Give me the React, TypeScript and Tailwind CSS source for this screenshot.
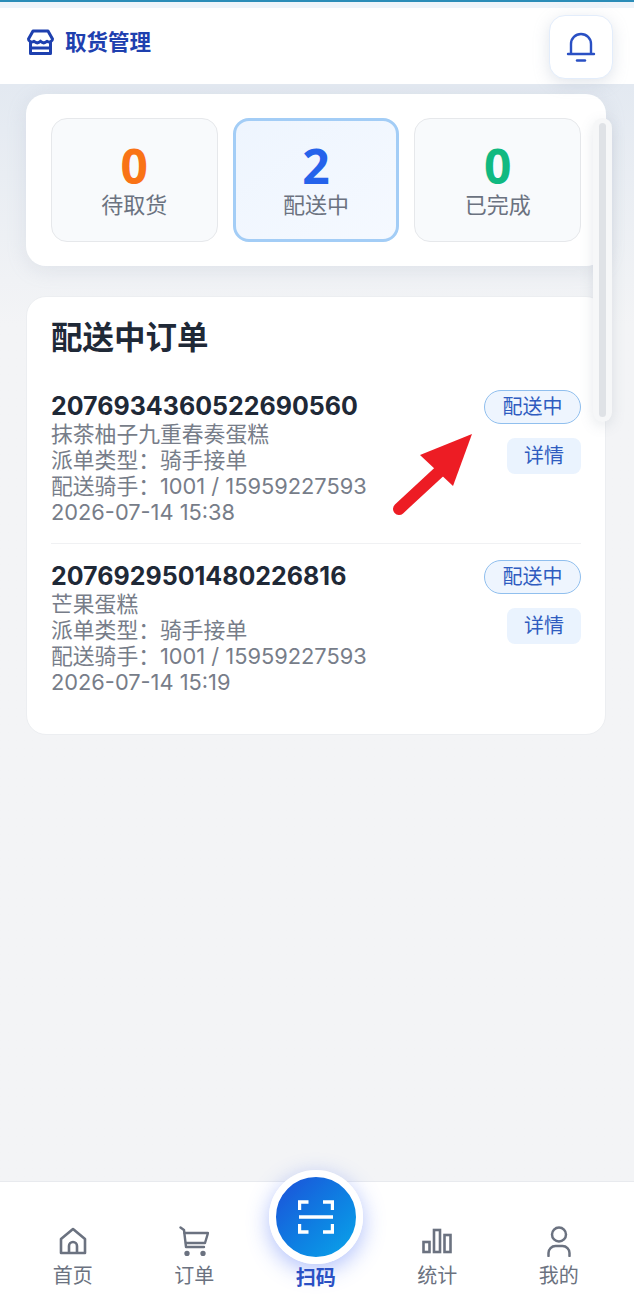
import { ReactNode } from "react";

const font = "font-['Inter','Noto_Sans_CJK_SC',sans-serif]";

function StatBox({ value, label, color, active }: { value: string; label: string; color: string; active?: boolean }) {
  return (
    <div
      className={
        active
          ? "h-[124px] rounded-[16px] border-[3px] border-[#a3cdf6] bg-gradient-to-br from-[#eef5fe] to-[#f5f9ff] flex flex-col items-center pt-[19px]"
          : "h-[124px] rounded-[16px] border border-[#e6e8eb] bg-[#f8fafc] flex flex-col items-center pt-[21px]"
      }
    >
      <div className={`font-['Noto_Sans',sans-serif] text-[48px] leading-[52px] font-bold ${color}`}>{value}</div>
      <div className="text-[22px] leading-[28px] text-[#6b7280] -mt-[1px]">{label}</div>
    </div>
  );
}

function OrderRow({ no, name, time }: { no: string; name: string; time: string }) {
  return (
    <div className="flex justify-between items-start">
      <div>
        <div className="text-[25px] leading-[30px] font-bold text-[#1f2937]">{no}</div>
        <div className="text-[21.8px] leading-[26px] text-[#777d89]">
          <div>{name}</div>
          <div>派单类型：骑手接单</div>
          <div>配送骑手：1001 / 15959227593</div>
          <div>{time}</div>
        </div>
      </div>
      <div className="flex flex-col items-end -mt-[1px]">
        <div className="w-[97px] h-[34px] rounded-full border border-[#90bfee] bg-[#eef5fe] text-[#2f5cc0] text-[20px] leading-[32px] text-center">
          配送中
        </div>
        <div className="mt-[14px] w-[74px] h-[36px] rounded-[8px] bg-[#eaf3fe] text-[#2f5cc0] text-[20px] leading-[36px] text-center">
          详情
        </div>
      </div>
    </div>
  );
}

function NavItem({ icon, label }: { icon: ReactNode; label: string }) {
  return (
    <div className="w-[121.5px] flex flex-col items-center pt-[40px]">
      <div className="h-[38px] flex items-center justify-center text-[#6b7280]">{icon}</div>
      <div className="text-[20px] leading-[26px] text-[#6b7280] mt-[3px]">{label}</div>
    </div>
  );
}

export default function App() {
  return (
    <div className={`relative h-[1295px] overflow-hidden bg-[#f3f4f6] flex flex-col ${font}`}>
      {/* top strip */}
      <div className="h-[8px] bg-[#eef4fa]">
        <div className="h-[2px] bg-[#2b8db8]" />
      </div>

      <header className="h-[76px] bg-white flex justify-between pr-[21px] pl-[27px] relative z-10">
        <div className="flex items-start pt-[19px] gap-[12px]">
          <svg width="27" height="26" viewBox="0 0 27 26" fill="none" stroke="#1e40af" strokeWidth="3" strokeLinejoin="round" className="mt-[2px]">
            <path d="M6 2h15l4.500 8c0 2.500-3 4-5.500 2.200-2 2-4.500 2-6.500 0-2 2-4.500 2-6.500 0C4.500 14 1.500 12.500 1.500 10z" />
            <path d="M3.500 12v12.500h20V12" />
            <path d="M3.500 19h20" />
          </svg>
          <div className="text-[21.5px] leading-[30px] font-bold text-[#1e40af] -ml-[1px]">取货管理</div>
        </div>
        <div className="mt-[7px] w-[64px] h-[64px] rounded-[16px] bg-white border border-[#e3edfb] shadow-[0_4px_16px_rgba(148,163,184,0.28)] flex items-center justify-center">
          <svg width="30" height="32" viewBox="0 0 30 32" fill="none" stroke="#2a50c4" strokeWidth="2.4" strokeLinecap="round">
            <path d="M5 22V13a10 10 0 0 1 20 0v9" />
            <path d="M2 23h26" />
            <path d="M11 29.500h8" />
          </svg>
        </div>
      </header>

      <main className="relative flex-1 pr-[28px] pl-[26px] pt-[10px] bg-gradient-to-b from-[#e3e9f1] via-[#f3f4f6] via-[22%] to-[#f3f4f6]">
        <section className="h-[172px] rounded-[20px] bg-white shadow-[0_4px_20px_rgba(148,163,184,0.18)] grid grid-cols-3 gap-[15px] px-[25px] pt-[24px]">
          <StatBox value="0" label="待取货" color="text-[#f97316]" />
          <StatBox value="2" label="配送中" color="text-[#2563eb]" active />
          <StatBox value="0" label="已完成" color="text-[#10b981]" />
        </section>

        <section className="mt-[30px] h-[439px] rounded-[20px] bg-white border border-[#eceef1] px-[24px] pt-[21px]">
          <h2 className="text-[31.5px] leading-[40px] font-bold text-[#1f2937]">配送中订单</h2>
          <div className="mt-[33px] pb-[18px] border-b border-[#f0f1f3]">
            <OrderRow no="2076934360522690560" name="抹茶柚子九重春奏蛋糕" time="2026-07-14 15:38" />
          </div>
          <div className="mt-[17px]">
            <OrderRow no="2076929501480226816" name="芒果蛋糕" time="2026-07-14 15:19" />
          </div>
        </section>

        {/* scrollbar overlay */}
        <div className="absolute left-[593px] top-[34px] w-[19px] h-[304px] rounded-full bg-[#f6f7f8] shadow-[0_4px_14px_rgba(100,116,139,0.16)] flex justify-center pt-[5px]">
          <div className="w-[7px] h-[294px] rounded-full bg-[#dfe2e6]" />
        </div>

        {/* red annotation arrow */}
        <svg className="absolute left-[390px] top-[345px]" width="86" height="90" viewBox="0 0 86 90">
          <path d="M9 80 L50 42" stroke="#ed1c24" strokeWidth="12" strokeLinecap="round" />
          <path d="M82 5 L30 26 L63 57 Z" fill="#ed1c24" />
        </svg>
      </main>

      <nav className="relative h-[114px] bg-white border-t border-[#e8eaee] flex pl-[12px]">
        <NavItem
          label="首页"
          icon={
            <svg width="28" height="28" viewBox="0 0 28 28" fill="none" stroke="currentColor" strokeWidth="2.6" strokeLinejoin="round">
              <path d="M2 12 14 2l12 10v14H2z" />
              <path d="M10 26v-7a4 4 0 0 1 8 0v7" />
            </svg>
          }
        />
        <NavItem
          label="订单"
          icon={
            <svg width="30" height="30" viewBox="0 0 30 30" fill="none" stroke="currentColor" strokeWidth="2.4" strokeLinecap="round" strokeLinejoin="round">
              <path d="M1.500 1.500 5 4l2 17h18" />
              <path d="M5.500 7H29l-3 10H7" />
              <circle cx="8" cy="27.500" r="1.500" fill="currentColor" />
              <circle cx="24" cy="27.500" r="1.500" fill="currentColor" />
            </svg>
          }
        />
        <div className="w-[121.5px] flex flex-col items-center">
          <div className="-mt-[12px] w-[94px] h-[94px] rounded-full bg-gradient-to-br from-[#1d4ed8] to-[#0ea5e9] border-[7px] border-white shadow-[0_6px_22px_rgba(59,100,246,0.4)] flex items-center justify-center">
            <svg width="36" height="34" viewBox="0 0 36 34" fill="none" stroke="white" strokeWidth="3.4">
              <path d="M1.500 10V2h9" />
              <path d="M25 2h9.500v8" />
              <path d="M1.500 24v8h9" />
              <path d="M25 32h9.500v-8" />
              <path d="M1 17h34" />
            </svg>
          </div>
          <div className="text-[20px] leading-[26px] font-bold text-[#2a50c4] mt-[1px]">扫码</div>
        </div>
        <NavItem
          label="统计"
          icon={
            <svg width="30" height="26" viewBox="0 0 30 26" fill="none" stroke="currentColor" strokeWidth="2.6">
              <rect x="1.500" y="14" width="6" height="10" />
              <rect x="12" y="2" width="6" height="22" />
              <rect x="22.500" y="7" width="6" height="17" />
            </svg>
          }
        />
        <NavItem
          label="我的"
          icon={
            <svg width="24" height="31" viewBox="0 0 24 31" fill="none" stroke="currentColor" strokeWidth="2.5" strokeLinecap="round">
              <circle cx="12" cy="8.500" r="7" />
              <path d="M1.500 30v-3a7 7 0 0 1 7-7h7a7 7 0 0 1 7 7v3" />
            </svg>
          }
        />
      </nav>
    </div>
  );
}
